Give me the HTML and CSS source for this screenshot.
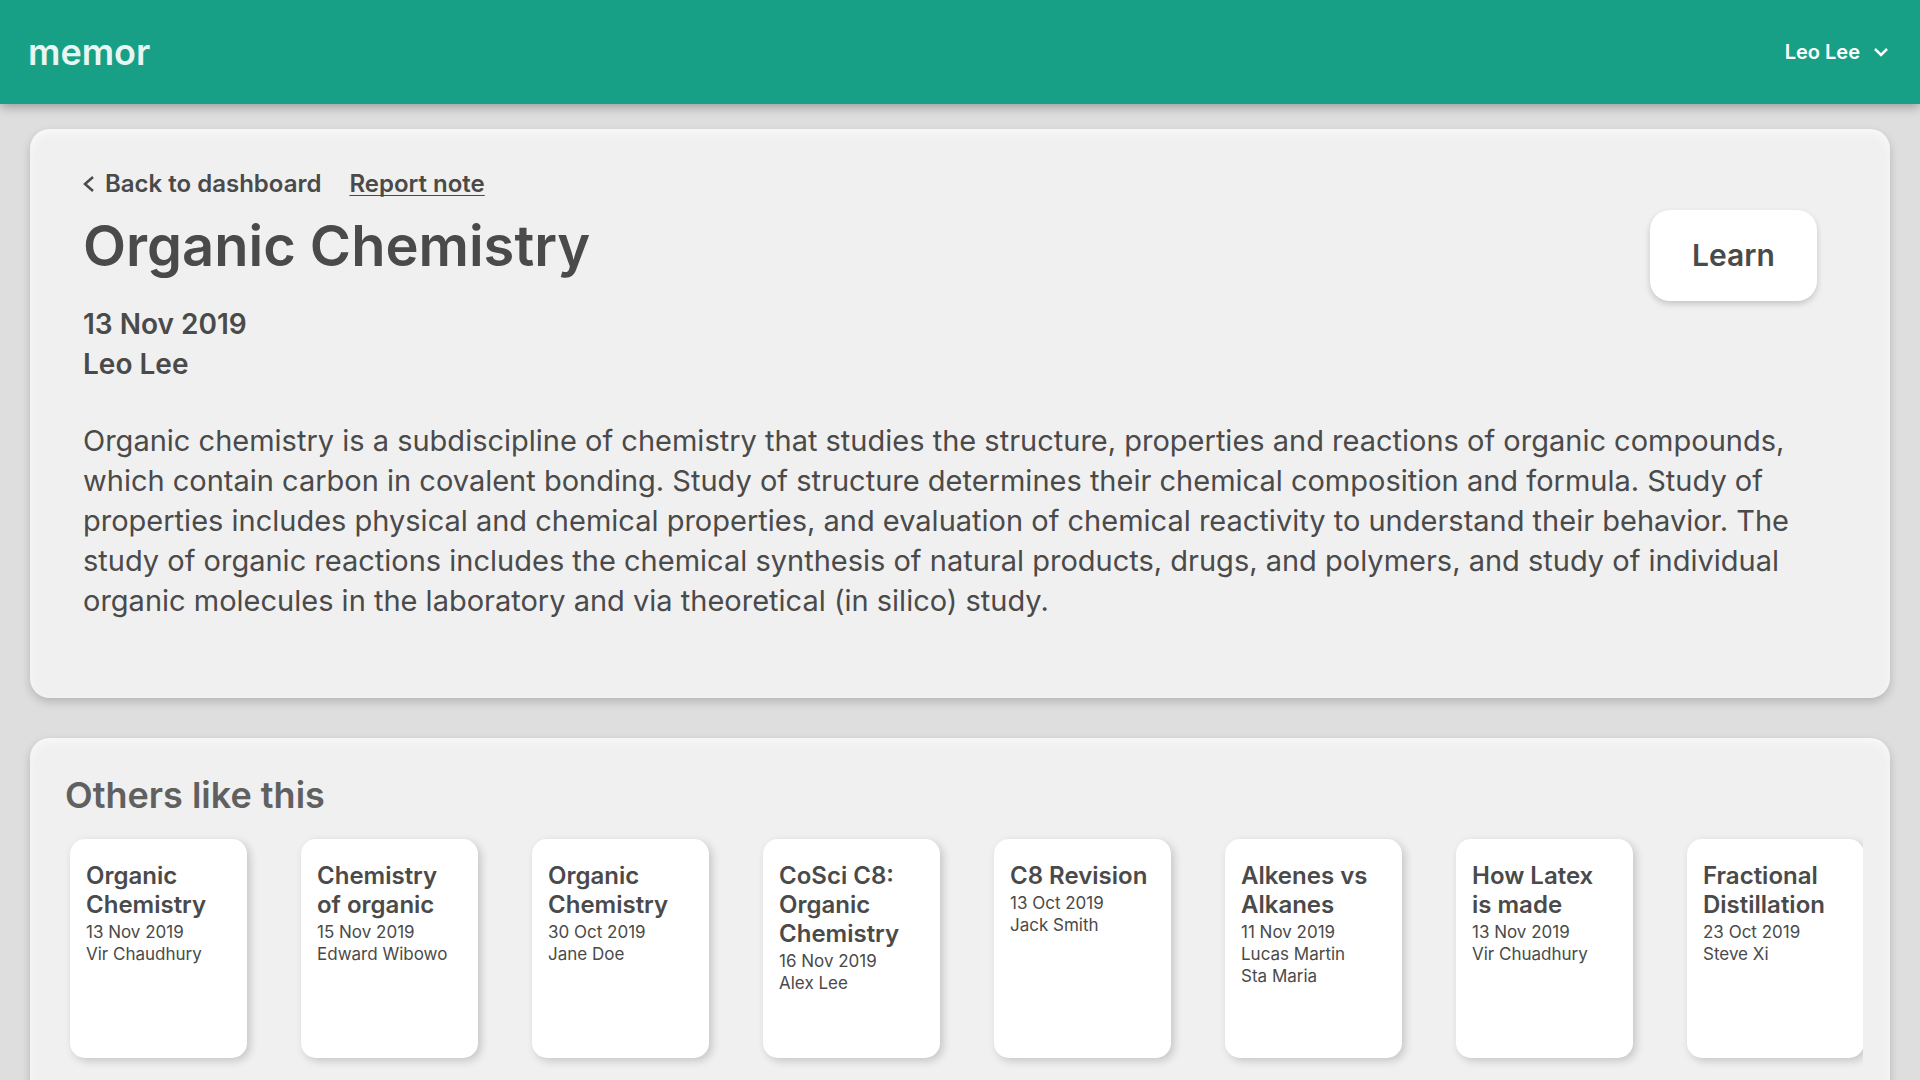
FILE: index.html
```html
<!DOCTYPE html>
<html lang="en">
<head>
<meta charset="utf-8">
<meta name="viewport" content="width=device-width, initial-scale=1">
<title>Organic Chemistry – memor</title>
<link rel="stylesheet" href="styles.css">
</head>
<body>
<header class="topbar">
  <a class="brand" href="#">memor</a>
  <button class="account" type="button">
    Leo Lee
    <svg class="chevron-down" viewBox="0 0 14 10" aria-hidden="true"><path d="M1 2 7 8 13 2"/></svg>
  </button>
</header>

<main class="content">
  <section class="panel note">
    <nav class="note-nav">
      <a class="back" href="#"><svg class="chevron-left" viewBox="0 0 12 16" aria-hidden="true"><path d="M10 1 2 8 10 15"/></svg>Back to dashboard</a>
      <a class="report" href="#">Report note</a>
    </nav>
    <div class="note-head">
      <div>
        <h1 class="note-title">Organic Chemistry</h1>
        <p class="note-meta">13 Nov 2019</p>
        <p class="note-meta">Leo Lee</p>
      </div>
      <button class="learn" type="button">Learn</button>
    </div>
    <p class="note-text">Organic chemistry is a subdiscipline of chemistry that studies the structure, properties and reactions of organic compounds, which contain carbon in covalent bonding. Study of structure determines their chemical composition and formula. Study of properties includes physical and chemical properties, and evaluation of chemical reactivity to understand their behavior. The study of organic reactions includes the chemical synthesis of natural products, drugs, and polymers, and study of individual organic molecules in the laboratory and via theoretical (in silico) study.</p>
  </section>

  <section class="panel related">
    <h2 class="related-title">Others like this</h2>
    <ul class="cards">
      <li class="card"><h3>Organic Chemistry</h3><p>13 Nov 2019</p><p>Vir Chaudhury</p></li>
      <li class="card"><h3>Chemistry of organic</h3><p>15 Nov 2019</p><p>Edward Wibowo</p></li>
      <li class="card"><h3>Organic Chemistry</h3><p>30 Oct 2019</p><p>Jane Doe</p></li>
      <li class="card"><h3>CoSci C8: Organic Chemistry</h3><p>16 Nov 2019</p><p>Alex Lee</p></li>
      <li class="card"><h3>C8 Revision</h3><p>13 Oct 2019</p><p>Jack Smith</p></li>
      <li class="card"><h3>Alkenes vs Alkanes</h3><p>11 Nov 2019</p><p>Lucas Martin Sta&nbsp;Maria</p></li>
      <li class="card"><h3>How Latex is made</h3><p>13 Nov 2019</p><p>Vir Chuadhury</p></li>
      <li class="card"><h3>Fractional Distillation</h3><p>23 Oct 2019</p><p>Steve Xi</p></li>
    </ul>
  </section>
</main>
</body>
</html>
```
FILE: styles.css
```css
* {
  box-sizing: border-box;
  margin: 0;
}

body {
  display: flex;
  flex-direction: column;
  height: 100vh;
  background: #dedede;
  color: #4a4a4a;
  font-family: Inter, "Liberation Sans", sans-serif;
}

a {
  color: inherit;
  text-decoration: none;
}

button {
  border: 0;
  font-family: inherit;
  font-weight: 600;
  cursor: pointer;
}

svg {
  fill: none;
  stroke: currentColor;
}

/* Top bar */
.topbar {
  display: flex;
  flex: none;
  align-items: center;
  justify-content: space-between;
  padding: 30px 32px 30px 28px;
  background: #17a086;
  box-shadow: 0 3px 10px rgba(0, 0, 0, 0.3);
  z-index: 1;
}

.brand {
  color: #e8f6f3;
  font-size: 36px;
  font-weight: 600;
  line-height: 44px;
}

.account {
  display: flex;
  align-items: center;
  gap: 14px;
  padding: 0;
  background: none;
  color: #fff;
  font-size: 20px;
  line-height: 24px;
}

.chevron-down {
  width: 14px;
  height: 10px;
  stroke-width: 2.5;
}

/* Page */
.content {
  display: flex;
  flex: 1;
  flex-direction: column;
  gap: 40px;
  min-height: 0;
  padding: 25px 30px;
  overflow-y: auto;
  scrollbar-width: none;
}

.panel {
  flex: none;
  border-radius: 20px;
  background: #f0f0f0;
  box-shadow: 0 4px 10px rgba(0, 0, 0, 0.18), inset 0 4px 10px rgba(255, 255, 255, 0.6);
}

/* Note */
.note {
  padding: 40px 73px 77px 53px;
}

.note-nav {
  display: flex;
  align-items: center;
  gap: 28px;
  margin-bottom: 11px;
  font-size: 24px;
  font-weight: 600;
  line-height: 30px;
}

.back {
  display: flex;
  align-items: center;
  gap: 10px;
}

.chevron-left {
  width: 12px;
  height: 16px;
  stroke-width: 2.5;
}

.report {
  text-decoration: underline 1px;
  text-decoration-skip-ink: none;
  text-underline-offset: 3px;
}

.note-head {
  display: flex;
  align-items: flex-start;
  justify-content: space-between;
}

.note-title {
  margin-bottom: 22px;
  font-size: 56px;
  font-weight: 600;
  line-height: 72px;
}

.note-meta {
  font-size: 28px;
  font-weight: 600;
  line-height: 40px;
}

.learn {
  min-width: 167px;
  padding: 27px 40px;
  border-radius: 20px;
  background: #fff;
  box-shadow: 0 3px 6px rgba(0, 0, 0, 0.18);
  color: #4a4a4a;
  font-size: 30px;
  line-height: 37px;
}

.note-text {
  margin-top: 37px;
  font-size: 29px;
  line-height: 40px;
}

/* Related notes */
.related {
  padding: 35px 27px 24px 35px;
}

.related-title {
  margin-bottom: 14px;
  color: #606060;
  font-size: 36px;
  font-weight: 600;
  line-height: 44px;
}

.cards {
  display: flex;
  gap: 54px;
  padding: 8px 5px 24px;
  overflow-x: auto;
  scrollbar-width: none;
  list-style: none;
}

.card {
  flex: none;
  width: 177px;
  min-height: 219px;
  padding: 22px 16px;
  border-radius: 15px;
  background: #fff;
  box-shadow: 3px 3px 8px rgba(0, 0, 0, 0.18);
  font-size: 17px;
  line-height: 22px;
}

.card h3 {
  margin-bottom: 2px;
  font-size: 24px;
  font-weight: 600;
  line-height: 29px;
}
```
